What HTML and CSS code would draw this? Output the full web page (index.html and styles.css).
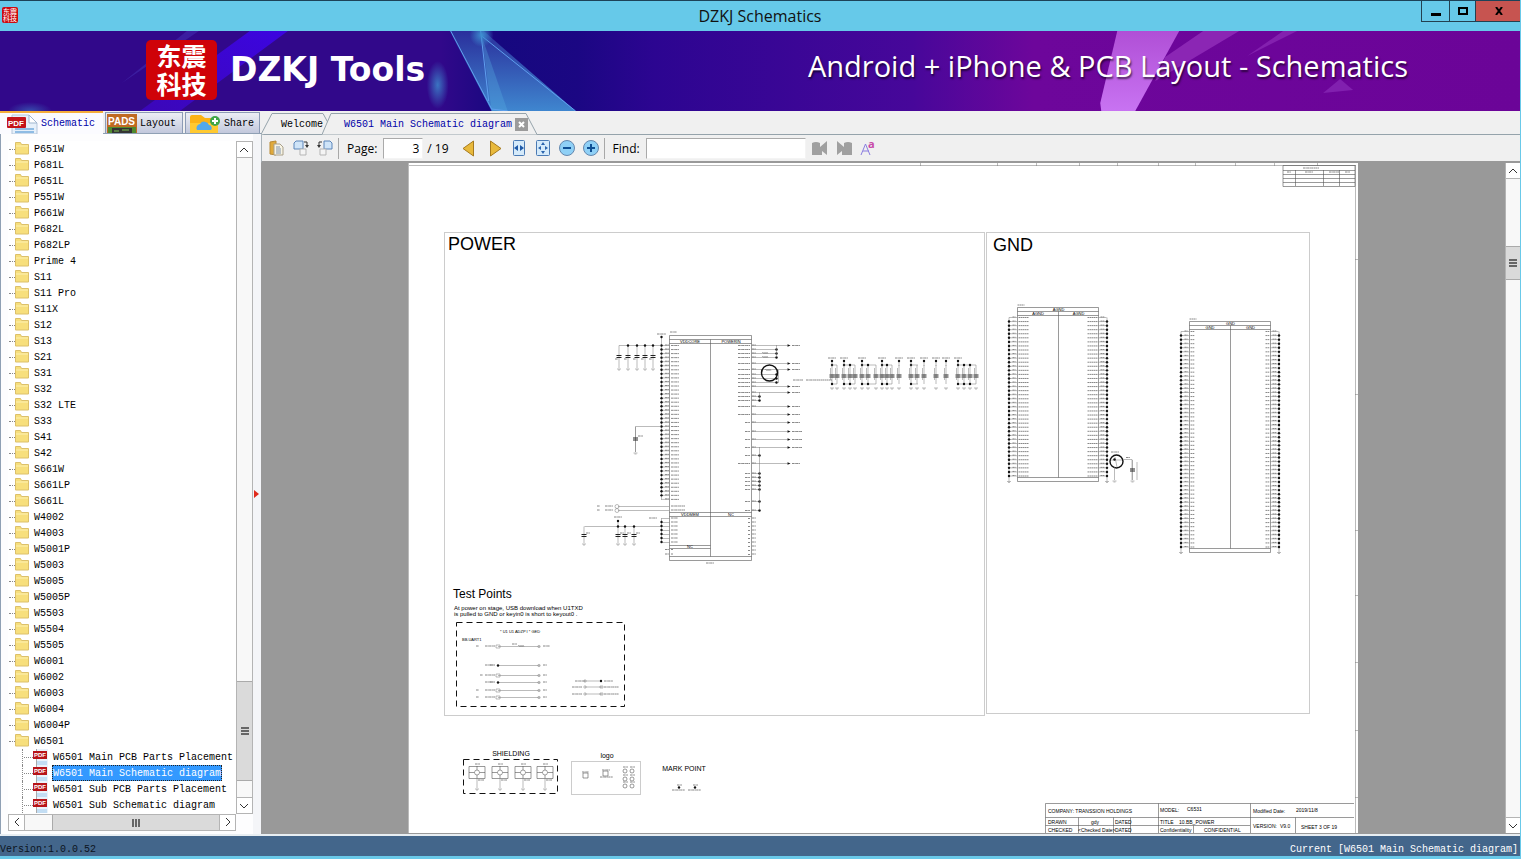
FILE: index.html
```html
<!DOCTYPE html>
<html lang="en">
<head>
    <meta charset="UTF-8">
    <meta name="viewport" content="width=device-width, initial-scale=1.0">
    <title>DZKJ Schematics</title>
    <link rel="stylesheet" href="styles.css">
</head>
<body>
    <header class="titlebar">
        <span class="app-icon">东震<br>科技</span>
        <h1>DZKJ Schematics</h1>
        <div class="window-buttons">
            <button class="win-min" aria-label="Minimize"><svg width="10" height="10"><path d="M0 7h10v3H0z"/></svg></button>
            <button class="win-max" aria-label="Maximize"><svg width="10" height="10"><path d="M1 2h8v6H1z" fill="none" stroke="#000" stroke-width="2"/></svg></button>
            <button class="win-close" aria-label="Close"><svg width="8" height="8"><path d="M1 0l6 8M7 0L1 8" stroke="#000" stroke-width="2"/></svg></button>
        </div>
    </header>

    <div class="banner">
        <svg class="banner-art" viewBox="0 0 1521 80" preserveAspectRatio="none">
            <defs>
                <linearGradient id="crystal" x1="0" y1="0" x2="0" y2="1">
                    <stop offset="0" stop-color="#2a2f9c"/>
                    <stop offset="1" stop-color="#3f86cf"/>
                </linearGradient>
                <linearGradient id="pink" x1="0" y1="0" x2="0" y2="1">
                    <stop offset="0" stop-color="#b04fd6"/>
                    <stop offset="1" stop-color="#c873f2"/>
                </linearGradient>
                <linearGradient id="beam" x1="1" y1="0" x2="0" y2="1">
                    <stop offset="0" stop-color="#3c05e0"/>
                    <stop offset="1" stop-color="#3b07b8"/>
                </linearGradient>
                <radialGradient id="glow">
                    <stop offset="0" stop-color="#3d8fd0"/>
                    <stop offset="1" stop-color="#3d8fd0" stop-opacity="0"/>
                </radialGradient>
            </defs>
            <path d="M250 0h38L180 80h-40z" fill="url(#beam)"/>
            <path d="M187 0h12L122 52z" fill="#4a3fc0" opacity=".4"/>
            <ellipse cx="30" cy="80" rx="22" ry="9" fill="url(#glow)" opacity=".5"/>
            <ellipse cx="438" cy="54" rx="11" ry="24" fill="url(#glow)" opacity=".8"/>
            <path d="M450 0h34l92 80h-84z" fill="url(#crystal)"/>
            <path d="M482 5l26 75h-16z" fill="#58b4e6" opacity=".3"/>
            <path d="M451 0l41 78 16 2M481 0l8 70M482 5l94 75" fill="none" stroke="#5fa0ee" stroke-width="1"/>
            <circle cx="482" cy="4" r="12" fill="url(#glow)"/>
            <path d="M1118 0h62l-44 80h-34l-1-8z" fill="url(#pink)"/>
            <path d="M1204 0h36l-84 50 10-24z" fill="#a03cc6" opacity=".6"/>
            <path d="M1284 0h14l-50 25z" fill="#9a3cc4" opacity=".5"/>
            <path d="M1324 62l17-14 13 11z" fill="#8a2cb8" opacity=".7"/>
        </svg>
        <div class="brand">
            <span class="brand-logo">东震<br>科技</span>
            <strong>DZKJ Tools</strong>
        </div>
        <p class="slogan">Android + iPhone &amp; PCB Layout - Schematics</p>
    </div>

    <main>
        <aside class="sidebar">
            <nav class="side-tabs">
                <button class="side-tab active">
                    <svg width="31" height="20" viewBox="0 0 31 20">
                        <path d="M5 1h17l8 8v11H5z" fill="#e6f0fa" stroke="#b5c6da"/>
                        <path d="M22 1v8h8z" fill="#fff" stroke="#9fb6cf"/>
                        <path d="M8 15h19M8 18h19" stroke="#8fbce4" stroke-width="2"/>
                        <rect y="3" width="19" height="11" rx="1" fill="#c4131a"/>
                        <text x="1" y="12" class="pdf-text">PDF</text>
                    </svg>
                    Schematic
                </button>
                <button class="side-tab layout">
                    <svg width="30" height="19" viewBox="0 0 30 19">
                        <rect width="30" height="19" fill="#bf6a22"/>
                        <rect x="1" y="13" width="28" height="6" fill="#4f8a2e"/>
                        <path d="M5 14h20v5H5z" fill="#333"/>
                        <path d="M7 17h5M15 16h7" stroke="#7ac04e"/>
                        <text x="1" y="11" class="pads-text">PADS</text>
                    </svg>
                    Layout
                </button>
                <button class="side-tab share">
                    <svg width="32" height="19" viewBox="0 0 32 19">
                        <path d="M0 3q0-2 2-2h9l4 3h13v15H0z" fill="#fbb216"/>
                        <path d="M0 9h28v10H0z" fill="#ffc930"/>
                        <path d="M7 16a4 4 0 0 1 3-6 5 5 0 0 1 9 1 3 3 0 0 1 2 5z" fill="#53a8ec"/>
                        <circle cx="25" cy="7" r="5" fill="#3fa648"/>
                        <path d="M25 4v6M22 7h6" stroke="#fff" stroke-width="2"/>
                    </svg>
                    Share
                </button>
            </nav>
            <div class="side-body">
                <div class="tree-box">
                    <ul class="tree" id="tree"></ul>
                    <div class="vscroll">
                        <button aria-label="Scroll up"><svg width="9" height="6"><path d="M0 5l4-4 4 4"/></svg></button>
                        <div class="track tree-track"><div class="thumb"></div></div>
                        <button aria-label="Scroll down"><svg width="9" height="6"><path d="M0 1l4 4 4-4"/></svg></button>
                    </div>
                </div>
                <div class="hscroll">
                    <button aria-label="Scroll left"><svg width="6" height="9"><path d="M5 0L1 4l4 4"/></svg></button>
                    <div class="track"><div class="thumb"></div></div>
                    <button aria-label="Scroll right"><svg width="6" height="9"><path d="M1 0l4 4-4 4"/></svg></button>
                </div>
            </div>
        </aside>
        <div class="splitter"><svg width="5" height="8"><path d="M0 0l5 4-5 4z" fill="#e02a1c"/></svg></div>

        <section class="viewer">
            <nav class="doc-tabs">
                <button class="doc-tab welcome">
                    <svg width="72" height="22"><path d="M0 21.5L11 .5h51l6 11"/></svg>
                    <span>Welcome</span>
                </button>
                <button class="doc-tab current">
                    <svg width="215" height="22"><path d="M0 21.5L9 .5h195l11 21"/></svg>
                    <span>W6501 Main Schematic diagram</span>
                    <i class="close-tab"><svg width="7" height="7"><path d="M1 1l5 5M6 1L1 6" stroke="#fff" stroke-width="2"/></svg></i>
                </button>
            </nav>
            <div class="toolbar">
                <button aria-label="Copy">
                    <svg width="16" height="16"><path d="M1 2l6-1v14l-6-1z" fill="#e0aa3c" stroke="#b98a35"/><path d="M5 4h6l3 3v8H5z" fill="#f8f4e4" stroke="#a9a08a"/><path d="M7 7h4M7 9h5M7 11h5M7 13h5" stroke="#7f94b0"/></svg>
                </button>
                <button aria-label="Rotate right">
                    <svg width="16" height="16"><path d="M3 1h7v8H1V3z" fill="#cfe4f8" stroke="#5d86ba"/><path d="M7 9h6v6H7z" fill="#f4f4f4" stroke="#b5b5b5"/><path d="M11 2h3v4" fill="none" stroke="#333"/><path d="M12 5h4l-2 3z" fill="#333"/></svg>
                </button>
                <button aria-label="Rotate left">
                    <svg width="16" height="16"><path d="M7 1h6l2 2v6H7z" fill="#cfe4f8" stroke="#5d86ba"/><path d="M3 9h6v6H3z" fill="#f4f4f4" stroke="#b5b5b5"/><path d="M5 2H2v4" fill="none" stroke="#333"/><path d="M0 5h4L2 8z" fill="#333"/></svg>
                </button>
                <span class="sep"></span>
                <label for="page">Page:</label>
                <input type="text" id="page" value="3">
                <span class="page-count">/ 19</span>
                <button class="arrow prev" aria-label="Previous page"><svg width="13" height="17"><path d="M11.5 1v15L1 8.500z" fill="#e8b93c" stroke="#a67a1e"/></svg></button>
                <button class="arrow next" aria-label="Next page"><svg width="13" height="17"><path d="M1.500 1v15L12 8.500z" fill="#e8b93c" stroke="#a67a1e"/></svg></button>
                <button aria-label="Fit width"><svg width="16" height="16"><rect x="2.500" y=".5" width="11" height="15" rx="1" fill="#d5eafa" stroke="#4a7ab4"/><path d="M7 5v6L3 8zM9 5v6l4-3z" fill="#1f5aa8"/></svg></button>
                <button aria-label="Fit page"><svg width="16" height="16"><rect x="1.500" y=".5" width="13" height="15" rx="1" fill="#d5eafa" stroke="#4a7ab4"/><path d="M8 2l2 3H6zM8 14l2-3H6zM3 8l3-2v4zM13 8l-3-2v4z" fill="#2a64ae"/></svg></button>
                <button aria-label="Zoom out"><svg width="16" height="16"><circle cx="8" cy="8" r="7.500" fill="#8fd0f6" stroke="#6487ae"/><path d="M4 8h8" stroke="#0f4f94" stroke-width="2"/></svg></button>
                <button aria-label="Zoom in"><svg width="16" height="16"><circle cx="8" cy="8" r="7.500" fill="#8fd0f6" stroke="#6487ae"/><path d="M4 8h8M8 4v8" stroke="#0f4f94" stroke-width="2"/></svg></button>
                <span class="sep"></span>
                <label for="find">Find:</label>
                <input type="text" id="find">
                <button aria-label="Find previous"><svg width="16" height="16"><path d="M0 3q4-2 8 0v4l7-6v14l-5-4v4H0z" fill="#a0a0a0"/></svg></button>
                <button aria-label="Find next"><svg width="16" height="16"><path d="M16 3q-4-2-8 0v4L1 1v14l5-4v4h10z" fill="#a0a0a0"/></svg></button>
                <button aria-label="Match case"><svg width="18" height="26"><path d="M1 20L5.500 9 10 20M3 16h6" fill="none" stroke="#8a7de0"/><text x="8" y="13" class="small-a">a</text></svg></button>
            </div>
            <div class="canvas">
                <div class="paper">
                    <svg id="sheet" width="950" height="671" viewBox="408 163 950 671"></svg>
                </div>
                <div class="vscroll page-scroll">
                    <button aria-label="Page up"><svg width="9" height="6"><path d="M0 5l4-4 4 4"/></svg></button>
                    <div class="track page-track"><div class="thumb"></div></div>
                    <button aria-label="Page down"><svg width="9" height="6"><path d="M0 1l4 4 4-4"/></svg></button>
                </div>
            </div>
        </section>
    </main>

    <footer class="statusbar">
        <span class="version">Version:1.0.0.52</span>
        <span>Current [W6501 Main Schematic diagram]</span>
    </footer>

    <script src="script.js"></script>
</body>
</html>
```
FILE: styles.css
```css
* {
    box-sizing: border-box;
}
body {
    margin: 0;
    height: 100vh;
    display: flex;
    flex-direction: column;
    overflow: hidden;
    background-color: #f0f0f0;
    border-right: 1px solid #69c9e9;
    font-family: "Liberation Mono", "Noto Sans CJK SC", monospace;
    font-size: 10px;
    color: #000;
}
button {
    padding: 0;
    border: none;
    background: none;
    font: inherit;
    color: inherit;
    cursor: pointer;
}
svg {
    display: block;
    flex: none;
}

/* title bar */
.titlebar {
    position: relative;
    flex: none;
    height: 31px;
    display: flex;
    align-items: center;
    justify-content: center;
    background-color: #66c9e9;
    border-top: 1px solid #1d4258;
}
.titlebar h1 {
    margin: 0;
    font: 16px/20px "Open Sans", sans-serif;
    color: #111;
}
.app-icon {
    position: absolute;
    left: 2px;
    top: 6px;
    width: 16px;
    height: 16px;
    border-radius: 2px;
    background-color: #cc0a10;
    color: #fff;
    font: 7px/7px "Noto Sans CJK SC", sans-serif;
    text-align: center;
    padding-top: 1px;
}
.window-buttons {
    position: absolute;
    right: -1px;
    top: 0;
    display: flex;
}
.window-buttons button {
    height: 21px;
    display: flex;
    align-items: center;
    justify-content: center;
    border-left: 1px solid #234050;
    border-bottom: 1px solid #234050;
}
.win-min {
    width: 28px;
}
.win-max {
    width: 26px;
}
.window-buttons .win-close {
    width: 46px;
    background-color: #c75450;
}

/* banner */
.banner {
    position: relative;
    flex: none;
    height: 80px;
    display: flex;
    align-items: center;
    justify-content: space-between;
    padding: 0 112px 2px 146px;
    background: linear-gradient(90deg, #31088a 0, #31088a 29%, #16087f 33%, #1b0783 38%, #2c0591 43%, #47079a 60%, #6d069b 68%, #6b0498 100%);
    color: #fff;
}
.banner-art {
    position: absolute;
    left: 0;
    top: 0;
    width: 100%;
    height: 100%;
}
.brand {
    position: relative;
    display: flex;
    align-items: center;
    gap: 13px;
}
.brand-logo {
    width: 71px;
    height: 60px;
    border-radius: 5px;
    background-color: #cf0208;
    font: bold 25px/28px "Noto Sans CJK SC", sans-serif;
    text-align: center;
    padding-top: 1px;
}
.brand strong {
    font: bold 33px/60px "DejaVu Sans", sans-serif;
}
.slogan {
    position: relative;
    margin: 0;
    padding-bottom: 8px;
    font: 29px/40px "Open Sans", sans-serif;
    text-shadow: 1px 2px 2px rgba(0, 0, 0, 0.6);
}

main {
    flex: 1;
    min-height: 0;
    display: flex;
}

/* left panel */
.sidebar {
    flex: none;
    width: 253px;
    display: flex;
    flex-direction: column;
}
.side-tabs {
    display: flex;
    height: 23px;
    width: 261px;
    align-items: flex-end;
    gap: 2px;
    border-bottom: 1px solid #8fa0b4;
}
.side-tab {
    height: 21px;
    display: flex;
    align-items: center;
    gap: 3px;
    padding: 0 4px 0 1px;
    border: 1px solid #8c9bb5;
    border-bottom: none;
    background: linear-gradient(#eceef5, #c2c8dc);
}
.side-tab.active {
    width: 103px;
    height: 23px;
    margin-bottom: -1px;
    gap: 3px;
    padding: 0 7px;
    border: none;
    border-top: 2px solid #f5ad3b;
    background: #fbfbff;
    color: #0000a8;
}
.side-tab.layout {
    width: 78px;
}
.side-tab.share {
    width: 75px;
    gap: 2px;
    padding: 0 4px;
}
.pdf-text {
    font: bold 8px "Liberation Sans", sans-serif;
    fill: #fff;
}
.pads-text {
    font: bold 10px "Liberation Sans", sans-serif;
    fill: #fff;
}
.side-body {
    flex: 1;
    min-height: 0;
    display: flex;
    flex-direction: column;
    padding: 7px 0 3px 7px;
    background-color: #fdfdfe;
    border-left: 1px solid #8fa0b4;
}
.tree-box {
    flex: 1;
    min-height: 0;
    display: flex;
    background-color: #fff;
}
.tree {
    flex: 1;
    min-width: 0;
    margin: 0;
    padding: 0;
    list-style: none;
    overflow: hidden;
    white-space: nowrap;
}
.tree ul {
    margin: 0 0 0 14px;
    padding: 0;
    list-style: none;
}
.tree a {
    display: flex;
    align-items: center;
    height: 16px;
    color: #000;
    text-decoration: none;
}
.tree a::before {
    content: "";
    width: 6px;
    margin-left: 1px;
    border-top: 1px dotted #888;
}
.tree a svg {
    margin-right: 4px;
}
.tree a span {
    padding: 2px 1px 0;
    line-height: 14px;
}
.tree ul li {
    border-left: 1px dotted #888;
}
.tree ul a::before {
    width: 9px;
}
.tree ul a svg {
    margin-right: 3px;
}
.tree a.selected span {
    background-color: #3399ff;
    color: #fff;
    outline: 1px dotted #222;
    outline-offset: -1px;
}

/* scroll bars */
.vscroll {
    flex: none;
    width: 17px;
    display: flex;
    flex-direction: column;
    background-color: #f8f8f8;
    border: 1px solid #b4b4b4;
}
.hscroll {
    flex: none;
    height: 17px;
    display: flex;
    margin-right: 17px;
    background-color: #f8f8f8;
    border: 1px solid #b4b4b4;
}
.vscroll button,
.hscroll button {
    flex: none;
    width: 15px;
    height: 15px;
    display: flex;
    align-items: center;
    justify-content: center;
    background-color: #fff;
}
.vscroll path,
.hscroll path {
    fill: none;
    stroke: #333;
}
.track {
    flex: 1;
    display: flex;
    border: 0 solid #b4b4b4;
}
.vscroll .track {
    flex-direction: column;
    border-width: 1px 0;
}
.hscroll .track {
    border-width: 0 1px;
    justify-content: flex-end;
}
.thumb {
    display: flex;
    background: #dadada;
    border: 0 solid #aaa;
}
.vscroll .thumb::before {
    content: "";
    width: 8px;
    height: 8px;
    margin: auto;
    background: repeating-linear-gradient(#666 0 2px, transparent 2px 3px);
}
.hscroll .thumb::before {
    content: "";
    width: 8px;
    height: 8px;
    margin: auto;
    background: repeating-linear-gradient(90deg, #666 0 2px, transparent 2px 3px);
}
.hscroll .thumb {
    width: 86%;
    border-left-width: 1px;
}
.tree-track {
    justify-content: flex-end;
    padding-bottom: 16px;
}
.tree-track .thumb {
    height: 16%;
    border-width: 1px 0;
}
.page-track .thumb {
    height: 34px;
    border-width: 1px 0;
    margin-top: 67px;
}
.page-scroll {
    width: 15px;
    border-width: 0 0 0 1px;
}
.page-scroll button {
    width: 14px;
}

.splitter {
    flex: none;
    width: 8px;
    margin-top: 23px;
    display: flex;
    align-items: center;
    padding-left: 1px;
    padding-top: 20px;
    background-color: #f4f5f8;
}

/* document area */
.viewer {
    flex: 1;
    min-width: 0;
    display: flex;
    flex-direction: column;
}
.doc-tabs {
    flex: none;
    display: flex;
    height: 24px;
    padding-top: 2px;
    border-bottom: 1px solid #95a3ab;
}
.doc-tab {
    position: relative;
    height: 22px;
    display: flex;
    align-items: center;
    padding-top: 1px;
}
.doc-tab > svg {
    position: absolute;
    left: 0;
    top: 0;
}
.doc-tab > svg path {
    fill: #f0f0f0;
    stroke: #95a3ab;
}
.doc-tab span {
    position: relative;
}
.welcome {
    width: 61px;
    padding-left: 20px;
}
.current {
    width: 215px;
    padding-left: 22px;
    gap: 3px;
    color: #0000a8;
}
.close-tab {
    position: relative;
    width: 13px;
    height: 13px;
    display: flex;
    align-items: center;
    justify-content: center;
    background-color: #9b9b9b;
}
.toolbar {
    flex: none;
    height: 28px;
    display: flex;
    align-items: center;
    gap: 8px;
    padding-left: 7px;
    border-left: 1px solid #aab4ba;
    border-bottom: 2px solid #999;
    font: 12px "Open Sans", sans-serif;
}
.toolbar button {
    width: 16px;
}
.toolbar input {
    height: 21px;
    border: 1px solid #aaa;
    border-right-color: #f4f4f4;
    border-bottom-color: #f4f4f4;
    background-color: #fff;
    font: 12px "Open Sans", sans-serif;
    padding: 0 3px;
}
#page {
    width: 40px;
    margin-left: -2px;
    text-align: right;
}
#find {
    width: 160px;
    margin-left: -2px;
    margin-right: -2px;
}
.page-count {
    margin-left: -4px;
}
.sep {
    width: 1px;
    height: 21px;
    margin-left: -3px;
    background-color: #a8a8a8;
}
.toolbar .arrow {
    width: 15px;
}
.toolbar .prev {
    margin: 0 2px 0 5px;
}
.toolbar .next {
    margin-right: -1px;
    margin-left: 2px;
}
.small-a {
    font: bold 11px "Open Sans", sans-serif;
    fill: #c84aa8;
}
.canvas {
    flex: 1;
    min-height: 0;
    display: flex;
    background-color: #999;
    border-bottom: 1px solid #999;
}
.paper {
    flex: 1;
    min-width: 0;
    display: flex;
    justify-content: center;
    align-items: flex-start;
    overflow: hidden;
}
#sheet {
    background-color: #fff;
    font-family: "Liberation Sans", sans-serif;
}
#sheet .wire {
    fill: none;
    stroke: #777;
    stroke-width: 0.5;
}
#sheet .box {
    fill: none;
    stroke: #555;
    stroke-width: 0.6;
}
#sheet .label {
    stroke: #888;
    stroke-width: 1;
    stroke-dasharray: 2 0.4 1.4 0.3;
}
#sheet .frame {
    fill: none;
    stroke: #999;
    stroke-dasharray: 1 1;
}
#sheet .dashed {
    fill: none;
    stroke: #111;
    stroke-dasharray: 6 4;
}
#sheet .ring {
    fill: none;
    stroke: #111;
    stroke-width: 1.4;
}
#sheet .t18 { font-size: 18px; }
#sheet .t12 { font-size: 12px; }
#sheet .t7 { font-size: 7px; }
#sheet .t6 { font-size: 6px; }
#sheet .t5 { font-size: 5px; }
#sheet .t4 { font-size: 4px; }

/* status bar */
.statusbar {
    flex: none;
    height: 25px;
    margin-right: -1px;
    display: flex;
    justify-content: space-between;
    align-items: center;
    padding: 6px 3px 0 0;
    background-color: #43668b;
    border-top: 2px solid #e8eef2;
    border-bottom: 3px solid #69c9e9;
    color: #fff;
}
.version {
    color: #0c1420;
}
```
FILE: script.js
```js
const folders = ['P651W', 'P681L', 'P651L', 'P551W', 'P661W', 'P682L', 'P682LP', 'Prime 4',
    'S11', 'S11 Pro', 'S11X', 'S12', 'S13', 'S21', 'S31', 'S32', 'S32 LTE', 'S33', 'S41', 'S42',
    'S661W', 'S661LP', 'S661L', 'W4002', 'W4003', 'W5001P', 'W5003', 'W5005', 'W5005P', 'W5503',
    'W5504', 'W5505', 'W6001', 'W6002', 'W6003', 'W6004', 'W6004P', 'W6501'];
const files = ['W6501 Main PCB Parts Placement', 'W6501 Main Schematic diagram',
    'W6501 Sub PCB Parts Placement', 'W6501 Sub Schematic diagram'];

const folderIcon = `<svg width="14" height="14"><path d="M.5 .5h5l1 2h7v9.500H.5z" fill="#f7df7c" stroke="#dcc06a"/><path d="M1 4h12" stroke="#fdf1b4"/></svg>`;
const pdfIcon = `<svg width="16" height="16"><path d="M3 0h12v16H3z" fill="#eaf3fb"/><path d="M4 13h10M4 15h10" stroke="#9cc8ec"/>
    <path d="M3.500 0v16" stroke="#aaa"/><rect y="2" width="14" height="8" fill="#b81419"/><text x="1" y="8" font-size="6" font-weight="bold" fill="#fff" font-family="Liberation Sans">PDF</text></svg>`;

document.getElementById('tree').innerHTML =
    folders.map(name => `<li><a href="#">${folderIcon}<span>${name}</span></a></li>`).join('') +
    `<li><ul>${files.map((name, i) => `<li><a href="#"${i === 1 ? ' class="selected"' : ''}>${pdfIcon}<span>${name}</span></a></li>`).join('')}</ul></li>` +
    `<li><a href="#">${folderIcon}</a></li>`;

// sheet drawing helpers
let out = '';
const wire = d => out += `<path class="wire" d="${d}"/>`;
const box = d => out += `<path class="box" d="${d}"/>`;
const label = (x, y, w) => out += `<path class="label" d="M${x} ${y}h${w}"/>`;
const dot = (x, y) => out += `<circle cx="${x}" cy="${y}" r="1.2" fill="#111"/>`;
const text = (x, y, size, str, anchor) => out += `<text x="${x}" y="${y}" class="t${size}" text-anchor="${anchor || 'start'}">${str}</text>`;
const arrow = (x, y) => out += `<path d="M${x} ${y - 1.3}l3 1.3-3 1.3z" fill="#111"/>`;
function ground(x, y) {
    wire(`M${x - 2} ${y}h4M${x - 1} ${y + 1}h2`);
}
function cap(x, top, mid, bottom) {
    wire(`M${x} ${top}V${bottom}`);
    out += `<path d="M${x - 2.5} ${mid - 1}h5M${x - 2.5} ${mid + 1}h5" stroke="#222"/>`;
}

// page border
wire('M408.5 163V834M409 165.500H1356M1355.500 165V834');
[920, 997, 1036, 1079, 1117, 1158, 1195, 1235, 1274, 1317].forEach(x => wire(`M${x}.5 163v3`));
[259, 394, 530, 595, 662, 730, 797].forEach(y => wire(`M1355 ${y}.500h3`));

// revision table
box('M1283 165.500h72v21h-72zM1283 170.500h72M1283 174.500h72M1283 178.500h72M1283 182.500h72M1295.500 170v16M1323.500 170v16M1339.500 170v16');
label(1303, 168, 16);
label(1287, 172, 4);
label(1305, 172, 8);
label(1329, 172, 10);
label(1345, 172, 5);

out += '<rect class="frame" x="444.5" y="232.500" width="540" height="483"/>';
out += '<rect class="frame" x="986.5" y="232.500" width="323" height="481"/>';
text(448, 250, 18, 'POWER');
text(993, 251, 18, 'GND');

// power chip
box('M669.500 335.500h82v225h-82zM669.500 339.500h82M669.500 343.500h82M710.500 339.500v217M669.500 512.500h82M669.500 516.500h82M669.500 545.500h41M669.500 548.500h41M669.500 556.500h82');
text(690, 343, 4, 'VDDCORE', 'middle');
text(731, 343, 4, 'POWERIN', 'middle');
text(690, 516, 4, 'VDDMEM', 'middle');
text(731, 516, 4, 'NC', 'middle');
text(690, 548, 4, 'NC', 'middle');
label(670, 332, 7);
label(706, 563, 8);
label(657, 334, 9);
wire('M661.500 337V500');
for (let i = 0; i < 39; i++) {
    const y = 345.5 + i * 4.05;
    wire(`M661.500 ${y}h8`);
    label(671, y, 8);
    label(665, y - 0.5, 4);
    if (i < 38) dot(661.5, y);
}
dot(661.5, 337);
[506, 510].forEach(y => {
    wire(`M618 ${y}.500h51`);
    label(671, y, 14);
    label(605, y, 8);
    label(597, y, 3);
    out += `<circle class="wire" cx="617" cy="${y}.500" r="2"/>`;
});
wire('M661.500 518V542M584.500 526.500H661.500');
for (let i = 0; i < 7; i++) {
    wire(`M661.500 ${518 + i * 4}.500h8`);
    label(671, 518 + i * 4, 7);
    if (i) dot(661.5, 518 + i * 4);
}
label(649, 518, 8);
label(614, 517, 8);
[549.5, 554].forEach(y => { label(665, y, 4); label(671, y, 2); });
for (let i = 0; i < 10; i++) {
    label(748, 518.5 + i * 4, 2);
    label(752, 518 + i * 4, 4);
}
wire('M618 521v5');
dot(618, 521);
[584, 618, 625, 634].forEach(x => {
    cap(x, 526.5, 535.5, 543);
    ground(x, 544);
    label(x + 2, 533, 4);
    if (x > 600) dot(x, 526.5);
});

// decoupling caps on the core rail
wire('M619 345.500H661');
[619, 628, 637, 645, 653].forEach(x => {
    cap(x, 345.5, 356.5, 368);
    ground(x, 369);
    label(x - 4, 359, 3);
    if (x > 620) dot(x, 345.5);
});
wire('M635.500 427V452M635 426.500h26');
cap(635.5, 427, 439, 452);
ground(635.5, 453);
label(638, 436, 5);

// power chip outputs
const pins = [76, 88, 100, 112, 131, 149, 162, 175, 187, 199, 217, 229, 241, 259, 284, 308, 333, 357, 381, 406, 430, 460, 472, 484, 496, 509, 545, 571];
const outputs = [76, 131, 149, 199, 217, 259, 284, 308, 333, 357, 381, 430];
pins.forEach(p => {
    const y = Math.floor(p / 3 + 320) + 0.5;
    const w = p > 300 && p !== 430 ? 5 : 12;
    label(750 - w, y, w);
    label(752, y - 0.5, 4);
    if (outputs.includes(p)) {
        wire(`M751.500 ${y}h36`);
        arrow(787.5, y);
        label(792, y, p % 3 ? 8 : 10);
    } else {
        wire(`M751.500 ${y}h${p < 190 ? 25 : 8}`);
        dot(p < 190 ? 776.5 : 759.5, y);
    }
});
wire('M776.500 345V357M778.500 370v13M759.500 392v8M759.500 447V510');
wire('M762 353l1-1 1 2 1-2 1 2 1-2 1 2M762 357l1-1 1 2 1-2 1 2 1-2 1 2M765 370l1-1 1 2 1-2 1 2 1-2 1 2');
out += '<circle class="ring" cx="769.500" cy="373" r="8"/>';
label(793, 380, 10);
label(806, 380, 26);

// capacitor bank
wire('M832 365h5M844 365h11M862 365h14M882 365h10M911 365h7M958 365h18M832 384h5M844 384h11M862 384h14M882 384h10M911 384h7M958 384h18');
[832, 837, 844, 850, 855, 862, 868, 876, 882, 887, 892, 899, 911, 917, 924, 936, 946, 958, 964, 970, 976].forEach((x, i) => {
    cap(x, 365, 376, 384);
    wire(`M${x - 1.5} 368v12`);
    ground(x, 388);
    if ([0, 2, 3, 5, 6, 8, 9, 12, 17, 18, 19].includes(i)) {
        dot(x, 365);
        dot(x, 384);
    }
});
[832, 844, 862, 882, 899, 911, 924, 936, 946, 958].forEach(x => {
    wire(`M${x} 361v5`);
    dot(x, 361);
    label(x - 4, 358, 8);
});

// ground chips
function groundChip(left, right, top, bottom, count, name, pinWidth) {
    const mid = (left + right + 1) / 2;
    box(`M${left} ${top}H${right}V${bottom}H${left}zM${left} ${top + 4}H${right}M${left} ${top + 8}H${right}M${left} ${bottom - 4}H${right}M${mid} ${top + 4}V${bottom - 4}`);
    text(mid, top + 3.5, 4, name, 'middle');
    text((left + mid) / 2, top + 7.5, 4, name, 'middle');
    text((mid + right) / 2, top + 7.5, 4, name, 'middle');
    label(left, top - 2.5, 7);
    const step = (bottom - top - 15.5) / (count - 1);
    wire(`M${left - 8.5} ${top + 10}V${bottom}M${right + 8.5} ${top + 10}V${bottom}`);
    for (let i = 0; i < count; i++) {
        const y = top + 10 + i * step;
        wire(`M${left - 8.5} ${y}h8M${right} ${y}h8`);
        label(left + 1, y, pinWidth);
        label(right - 1 - pinWidth, y, pinWidth);
        label(left - 5, y - 0.5, 3);
        label(right + 2, y - 0.5, 4);
        if (i) {
            dot(left - 8.5, y);
            dot(right + 8.5, y);
        }
    }
    ground(left - 8.5, bottom);
    ground(right + 8.5, bottom);
}
groundChip(1017.5, 1098.5, 307.5, 481.5, 40, 'AGND', 10);
groundChip(1189.5, 1270.5, 321.5, 552.5, 54, 'GND', 4);
out += '<circle class="ring" cx="1116.500" cy="461.500" r="6.500"/>';
wire('M1111 460h11M1115 457l2 10M1114.500 467V480M1124 459.500h8V480');
ground(1114.5, 481);
ground(1132.5, 481);
cap(1132.5, 460, 470, 480);
label(1111, 452, 8);
label(1126, 457.5, 4);
wire('M1137 462v18');
dot(1114.5, 459.5);

// test points
text(453, 598, 12, 'Test Points');
text(454, 610, 6, 'At power on stage, USB download when U1TXD');
text(454, 616, 6, 'is pulled to GND or keyin0 is short to keyout0 .');
out += '<rect class="dashed" x="456.500" y="622.500" width="168" height="84"/>';
text(500, 633, 4, '* U1 U1 ADZP I * GED');
text(462, 641, 4, 'BB.UART1');
[[646, 498, 476], [665, 498, 490], [675, 498, 480], [682, 498, 490], [690, 498, 476], [697, 498, 476]].forEach(([y, x, start], i) => {
    wire(`M${x} ${y}.500H540`);
    label(start, y, 3);
    label(485, y, 10);
    label(543, y, i ? 4 : 7);
    out += `<circle class="wire" cx="539" cy="${y}.500" r="1.200"/>`;
    if (i === 1 || i === 3) dot(498, y + 0.5);
    else wire(`M496 ${y - 1}h4v3h-4z`);
});
wire('M518 646l1-1 1 2 1-2 1 2 1-2 1 2');
label(512, 644, 5);
[681, 687, 694].forEach((y, i) => {
    wire(`M585 ${y}H602`);
    label(i ? 572 : 575, y, 10);
    label(604, y, i ? 15 : 9);
    out += `<circle class="wire" cx="585" cy="${y}" r="1.200"/>`;
    if (i) wire(`M600 ${y - 1}h3v2h-3z`);
    else dot(601, y);
});

// shielding, logo and mark points
text(511, 756, 7, 'SHIELDING', 'middle');
out += '<rect class="dashed" x="463.500" y="759.500" width="94" height="34"/>';
[477, 500, 523, 545].forEach(x => {
    box(`M${x - 8} 766.500h16v12h-16zM${x - 8} 772.500h16M${x} 766v12`);
    out += `<circle cx="${x}" cy="772.500" r="2.500" fill="#fff" stroke="#666" stroke-width=".6"/>`;
    wire(`M${x} 778v10`);
    ground(x, 789);
    label(x - 2, 764, 5);
    label(x + 1, 780, 6);
});
text(607, 758, 7, 'logo', 'middle');
out += '<rect class="frame" x="571.500" y="761.500" width="69" height="33"/>';
box('M583 773h5v5h-5zM603 771h5v5h-5z');
label(582, 772, 7);
label(602, 770, 8);
label(600, 777, 13);
[625, 632].forEach(x => [771, 779, 786].forEach(y => {
    out += `<circle class="box" cx="${x}" cy="${y}" r="2"/>`;
    label(x - 2, y - 4, 5);
}));
text(684, 771, 7, 'MARK POINT', 'middle');
[679, 695].forEach(x => {
    label(x - 2, 785, 5);
    label(x - 7, 790, 13);
    dot(x, 787.5);
});

// title block
box('M1354 803.500H1045.500V834M1045.500 817.500H1354M1045.500 825.500H1250M1158.500 803.500V834M1250.500 803.500V834M1078.500 817.500V834M1113.500 817.500V834M1130.500 817.500V834M1193.500 825.500V834M1295.500 817.500V834');
text(1048, 813, 5, 'COMPANY: TRANSSION HOLDINGS');
text(1160, 812, 5, 'MODEL:');
text(1187, 811, 5, 'C6531');
text(1253, 813, 5, 'Modified Date:');
text(1296, 812, 5, '2019/11/8');
text(1048, 824, 5, 'DRAWN');
text(1091, 824, 5, 'gdy');
text(1115, 824, 5, 'DATED');
text(1048, 832, 5, 'CHECKED');
text(1078, 832, 5, '&lt;Checked Date&gt;');
text(1115, 832, 5, 'DATED');
text(1160, 824, 5, 'TITLE');
text(1179, 824, 5, '10.BB_POWER');
text(1160, 832, 5, 'Confidentiality');
text(1204, 832, 5, 'CONFIDENTIAL');
text(1253, 828, 5, 'VERSION:');
text(1280, 828, 5, 'V9.0');
text(1301, 829, 5, 'SHEET 3  OF  19');

document.getElementById('sheet').innerHTML = out;
```
